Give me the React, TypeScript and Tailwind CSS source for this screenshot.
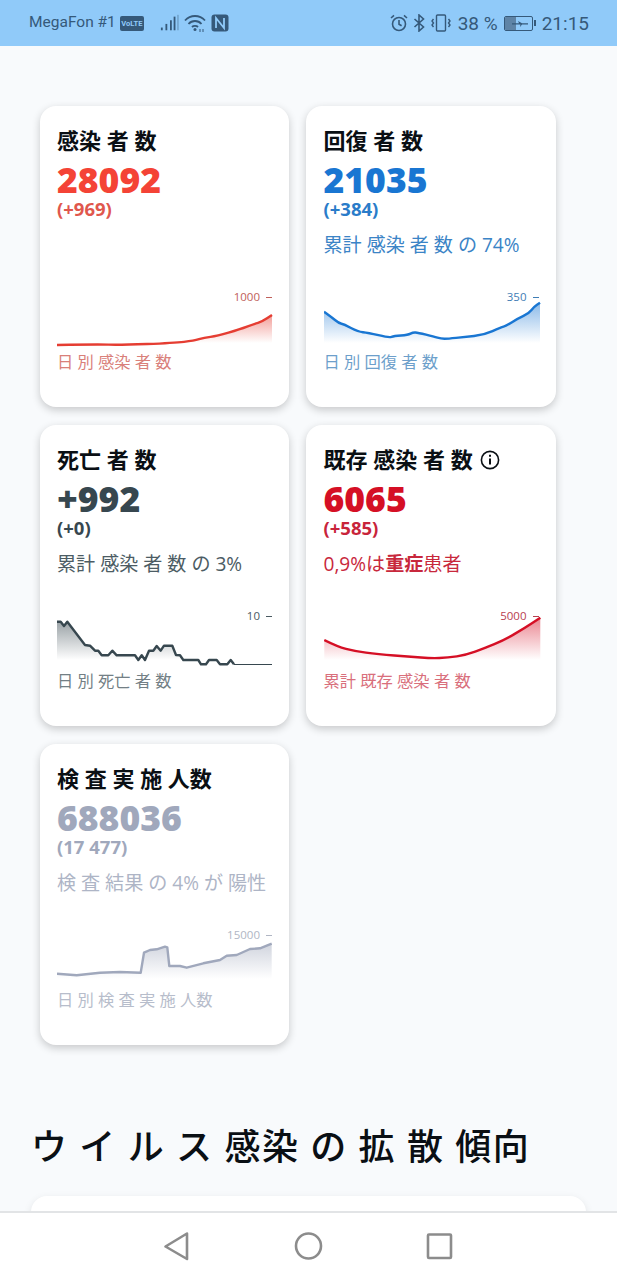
import React from "react";

const FONT = "font-['Open_Sans','Noto_Sans_CJK_JP',sans-serif]";

type Stat = {
  id: string;
  title: React.ReactNode;
  value: string;
  delta: string;
  desc?: React.ReactNode;
  caption: string;
  tick: string;
  tickClass: string;
  color: string;
  valueClass: string;
  deltaClass: string;
  descClass: string;
  captionClass: string;
  points: number[][];
  smooth?: boolean;
  tail?: string;
  fillBottom: number;
  fillTop: number;
};

const toPath = (pts: number[][], smooth?: boolean) => {
  if (!smooth) return pts.map((p, i) => `${i === 0 ? "M" : "L"}${p[0]} ${p[1]}`).join(" ");
  // quadratic through the midpoints, keeps the gentle curves from looking polygonal
  let d = `M${pts[0][0]} ${pts[0][1]}`;
  for (let i = 1; i < pts.length - 1; i++) {
    const mx = (pts[i][0] + pts[i + 1][0]) / 2;
    const my = (pts[i][1] + pts[i + 1][1]) / 2;
    d += ` Q${pts[i][0]} ${pts[i][1]} ${mx} ${my}`;
  }
  const last = pts[pts.length - 1];
  return `${d} L${last[0]} ${last[1]}`;
};

const InfoIcon = () => (
  <svg width="20" height="20" viewBox="0 0 20 20" className="ml-[7px]" fill="none" stroke="#0a0f14">
    <circle cx="10" cy="10" r="8.6" strokeWidth="1.6" />
    <path d="M10 8.5v6" strokeWidth="2" />
    <path d="M10 4.8v2" strokeWidth="2" />
  </svg>
);

const STATS: Stat[] = [
  {
    id: "infected",
    title: "感染 者 数",
    value: "28092",
    delta: "(+969)",
    caption: "日 別 感染 者 数",
    tick: "1000",
    tickClass: "text-[#c0605a]",
    color: "#e53d32",
    valueClass: "text-[#f44336]",
    deltaClass: "text-[#e0574d]",
    descClass: "text-[#e0574d]",
    captionClass: "text-[#d9807a]",
    points: [[0, 58], [40, 57.3], [63, 58], [117, 56], [137, 53.7], [147, 50.7], [160, 49], [183, 42.3], [197, 37], [205, 34.7], [215, 28]],
    smooth: true,
    fillTop: 28,
    fillBottom: 56,
  },
  {
    id: "recovered",
    title: "回復 者 数",
    value: "21035",
    delta: "(+384)",
    desc: "累計 感染 者 数 の 74%",
    caption: "日 別 回復 者 数",
    tick: "350",
    tickClass: "text-[#3f7db5]",
    color: "#1976d2",
    valueClass: "text-[#1976d2]",
    deltaClass: "text-[#2a7cc9]",
    descClass: "text-[#3b84c6]",
    captionClass: "text-[#6d9fcb]",
    points: [[0, 24.7], [7, 29.7], [15, 36.3], [20, 37.3], [34, 44.7], [44, 45.7], [65, 50.7], [70, 49], [84, 48], [89, 45.3], [94, 45.7], [110, 49.7], [117, 51.7], [124, 51.7], [140, 50], [160, 48], [177, 40.3], [182, 39], [194, 31.3], [205, 26.3], [210, 19.7], [216, 15.7]],
    smooth: true,
    fillTop: 16,
    fillBottom: 56,
  },
  {
    id: "deaths",
    title: "死亡 者 数",
    value: "+992",
    delta: "(+0)",
    desc: "累計 感染 者 数 の 3%",
    caption: "日 別 死亡 者 数",
    tick: "10",
    tickClass: "text-[#4a5a62]",
    color: "#37474f",
    valueClass: "text-[#37474f]",
    deltaClass: "text-[#37474f]",
    descClass: "text-[#4c5c64]",
    captionClass: "text-[#737f85]",
    points: [[0, 15.7], [3.7, 15.7], [7, 20], [10.3, 15.7], [28, 39], [33, 39.7], [38, 44.7], [41.3, 44.7], [44.7, 49.3], [51.3, 49.3], [55.3, 44.7], [59.7, 49.3], [78, 49.3], [81.3, 54], [84.7, 49.3], [88, 54], [92, 44.7], [96.3, 44.7], [99.7, 40], [103.7, 44.7], [107, 39.7], [115.3, 39.7], [119, 49], [123, 49.3], [126.3, 54], [141.3, 54], [144, 58.3], [149, 58.3], [152, 54], [159.7, 54], [163, 58.3], [170.3, 58.3], [173.7, 54], [177, 58.3]],
    tail: "M177 58.5 L215 58.5",
    fillTop: 16,
    fillBottom: 54,
  },
  {
    id: "active",
    title: (
      <>
        既存 感染 者 数
        <InfoIcon />
      </>
    ),
    value: "6065",
    delta: "(+585)",
    desc: (
      <>
        0,9%は<span className="font-bold">重症</span>患者
      </>
    ),
    caption: "累計 既存 感染 者 数",
    tick: "5000",
    tickClass: "text-[#b8404f]",
    color: "#d50f25",
    valueClass: "text-[#d50f25]",
    deltaClass: "text-[#c8243a]",
    descClass: "text-[#c8283c]",
    captionClass: "text-[#d96f7c]",
    points: [[0.3, 34], [13.7, 40.7], [30.3, 45], [53.7, 48.3], [87, 50.7], [107, 52.3], [123.7, 51.7], [142, 49], [160.3, 42.3], [180.3, 34], [200.3, 22.3], [216.3, 11.7]],
    smooth: true,
    fillTop: 12,
    fillBottom: 54,
  },
  {
    id: "tests",
    title: "検 査 実 施 人数",
    value: "688036",
    delta: "(17 477)",
    desc: "検 査 結果 の 4% が 陽性",
    caption: "日 別 検 査 実 施 人数",
    tick: "15000",
    tickClass: "text-[#b0b6c4]",
    color: "#a0a8bc",
    valueClass: "text-[#a0a8bc]",
    deltaClass: "text-[#a0a8bc]",
    descClass: "text-[#aeb5c6]",
    captionClass: "text-[#b7bdcb]",
    points: [[0, 48.7], [19.7, 50.3], [43, 47.7], [63, 47], [83.7, 47.7], [87, 27.7], [93, 25], [99.7, 24.3], [108, 21.7], [110.3, 22.3], [112.3, 41], [123, 41], [129.7, 42.7], [146.3, 38.3], [163, 35], [169.7, 30.7], [179.7, 30], [193, 24], [203, 23.3], [214.7, 18.7]],
    fillTop: 18,
    fillBottom: 54,
  },
];

function Sparkline({ stat }: { stat: Stat }) {
  const gradId = `fade-${stat.id}`;
  const line = toPath(stat.points, stat.smooth);
  const firstX = stat.points[0][0];
  const lastX = stat.points[stat.points.length - 1][0];
  return (
    <div className="relative h-[65px] w-[215px]">
      <svg width="217" height="65" viewBox="0 0 217 65" fill="none" className="block">
        <defs>
          <linearGradient id={gradId} gradientUnits="userSpaceOnUse" x1="0" y1={stat.fillTop} x2="0" y2={stat.fillBottom}>
            <stop offset="0" stopColor={stat.color} stopOpacity="0.5" />
            <stop offset="1" stopColor={stat.color} stopOpacity="0" />
          </linearGradient>
        </defs>
        <path d={`${line} L${lastX} ${stat.fillBottom} L${firstX} ${stat.fillBottom} Z`} fill={`url(#${gradId})`} />
        <path d={line} stroke={stat.color} strokeWidth="2.4" strokeLinejoin="round" />
        {stat.tail && <path d={stat.tail} stroke={stat.color} strokeWidth="1" />}
      </svg>
      <div className={`absolute right-[12px] top-[2px] text-[11.5px] leading-[16px] ${stat.tickClass}`}>{stat.tick}</div>
      <div className={`absolute right-0 top-[10px] h-px w-[6px] bg-current ${stat.tickClass}`} />
    </div>
  );
}

function StatCard({ stat }: { stat: Stat }) {
  return (
    <div className="h-[301px] rounded-2xl bg-white pl-[17.5px] pr-[16px] pt-[20px] shadow-[0_3px_9px_rgba(0,0,0,0.2)]">
      <div className="flex h-[29px] items-center text-[22px] font-bold leading-[29px] text-[#0a0f14] whitespace-pre">{stat.title}</div>
      <div className={`mt-[7px] text-[35.5px] font-extrabold leading-[35px] ${stat.valueClass}`}>{stat.value}</div>
      <div className={`text-[18.5px] font-bold leading-[24px] ${stat.deltaClass}`}>{stat.delta}</div>
      <div className={`mt-[10px] h-[28px] text-[19.1px] leading-[28px] whitespace-pre ${stat.descClass}`}>{stat.desc}</div>
      <div className="mt-[28px]">
        <Sparkline stat={stat} />
      </div>
      <div className={`h-[20px] text-[16.3px] leading-[20px] whitespace-pre ${stat.captionClass}`}>{stat.caption}</div>
    </div>
  );
}

function StatusBar() {
  const ink = "#35597a";
  return (
    <div className="flex h-[46px] items-center justify-between bg-[#90caf9] pl-[29px] pr-[28px] font-['Roboto',sans-serif] text-[#35597a]">
      <div className="flex items-center">
        <span className="text-[15.5px] leading-none">MegaFon #1</span>
        <span className="ml-[4px] rounded-[2px] bg-[#35597a] px-[1.5px] py-[1px] text-[7.5px] font-bold leading-[13px] text-[#90caf9]">VoLTE</span>
        <svg width="20" height="20" viewBox="0 0 22 20" className="ml-[16px]" fill={ink}>
          <rect x="1" y="15" width="2" height="3" />
          <rect x="6" y="11" width="2" height="7" />
          <rect x="11" y="7" width="2" height="11" />
          <rect x="15" y="3" width="2" height="15" />
          <rect x="19" y="1" width="1.5" height="17" opacity="0.4" />
        </svg>
        <svg width="22" height="20" viewBox="0 0 22 20" className="ml-[4px]" fill="none" stroke={ink} strokeWidth="1.8">
          <path d="M1 7.5 C6.5 1.5 15.5 1.5 21 7.5" />
          <path d="M4.5 11 C8 7 14 7 17.5 11" />
          <path d="M8 14 C9.5 12.5 12.5 12.5 14 14" />
          <circle cx="11" cy="16.5" r="1.5" fill={ink} stroke="none" />
          <path d="M16 16v3M19 16v3" strokeWidth="1" />
        </svg>
        <svg width="18" height="18" viewBox="0 0 18 18" className="ml-[5px]" fill="none">
          <rect x="0.5" y="0.5" width="17" height="17" rx="3" fill={ink} />
          <path d="M5 14V4l8 10V4" stroke="#90caf9" strokeWidth="1.8" />
        </svg>
      </div>
      <div className="flex items-center">
        <svg width="20" height="20" viewBox="0 0 20 20" fill="none" stroke={ink} strokeWidth="1.6">
          <circle cx="10" cy="11" r="6.5" />
          <path d="M10 7v4.2l2.6 1.6" />
          <path d="M2 5l3-2.6M18 5l-3-2.6" />
        </svg>
        <svg width="12" height="18" viewBox="0 0 12 18" className="ml-[4px]" fill="none" stroke={ink} strokeWidth="1.6">
          <path d="M1.5 5l9 8-4.5 4V1l4.5 4-9 8" />
        </svg>
        <svg width="20" height="20" viewBox="0 0 20 20" className="ml-[6px]" fill="none" stroke={ink} strokeWidth="1.4">
          <rect x="5.5" y="2" width="9" height="16" rx="1" />
          <path d="M2.5 6l-1.5 2 1.5 2-1.5 2 1.5 2M17.5 6l1.5 2-1.5 2 1.5 2-1.5 2" />
        </svg>
        <span className="ml-[7px] text-[19px] leading-none">38 %</span>
        <div className="ml-[6px] flex items-center">
          <div className="relative h-[15px] w-[29px] overflow-hidden rounded-[2px] border border-[#35597a]">
            <div className="h-full w-[11px] bg-[#5f84a6]" />
            <svg width="16" height="8" viewBox="0 0 16 8" className="absolute left-[7px] top-[3px]" fill={ink}>
              <path d="M0 3.2h7L6 1l4 2.2h6v1.4H10L8 7l.4-2.4H0z" />
            </svg>
          </div>
          <div className="ml-[1px] h-[6px] w-[2px] bg-[#35597a]" />
        </div>
        <span className="ml-[6px] text-[19px] leading-none">21:15</span>
      </div>
    </div>
  );
}

function NavBar() {
  return (
    <div className="absolute inset-x-0 bottom-0 flex h-[69px] items-center border-t-2 border-[#e2e4e6] bg-white">
      <svg width="617" height="67" viewBox="0 0 617 67" fill="none" stroke="#8c8c8c" strokeWidth="2.6" strokeLinejoin="round">
        <path d="M187 20.5 L165.5 33.5 L187 46 Z" />
        <circle cx="308.5" cy="33" r="12.5" />
        <rect x="428" y="21.5" width="23" height="23.5" rx="1" />
      </svg>
    </div>
  );
}

export default function App() {
  return (
    <div className={`relative h-[1280px] w-[617px] overflow-hidden bg-[#f8fafc] ${FONT}`}>
      <StatusBar />
      <div className="grid grid-cols-[249.5px_250px] gap-x-[17px] gap-y-[18px] pl-[39.5px] pt-[60px]">
        {STATS.map((stat) => (
          <StatCard key={stat.id} stat={stat} />
        ))}
      </div>
      <h2 className="ml-[31px] mt-[77px] text-[36px] font-medium leading-[50px] tracking-[1.5px] text-[#0a0f14] whitespace-pre">ウ イ ル ス 感染 の 拡 散 傾向</h2>
      <div className="mx-[31px] mt-[24px] h-[120px] rounded-2xl bg-white shadow-[0_3px_8px_rgba(0,0,0,0.1)]" />
      <NavBar />
    </div>
  );
}
